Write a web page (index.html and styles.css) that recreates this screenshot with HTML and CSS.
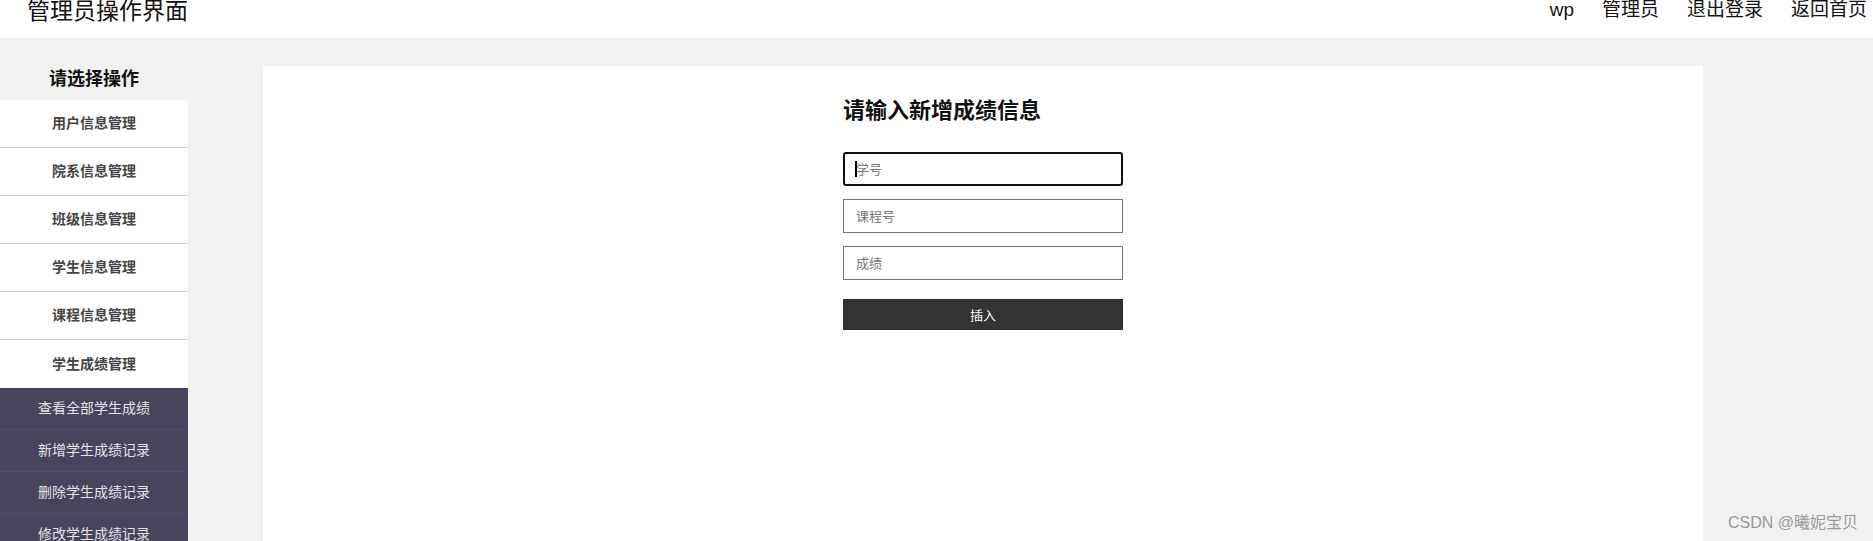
FILE: index.html
```html
<!DOCTYPE html>
<html>
<head>
  <meta charset="utf-8">
  <meta name="viewport" content="width=device-width, initial-scale=1">
  <link rel="stylesheet" href="styles.css">
</head>
<body>

<div class="top-bar">
  <div class="site-title">管理员操作界面</div>
  <div class="top-links">
    <span>wp</span>
    <span>管理员</span>
    <a href="#">退出登录</a>
    <a href="#">返回首页</a>
  </div>
</div>

<div class="page">
  <div class="side-menu">
    <h3>请选择操作</h3>
    <ul class="menu-list">
      <li>用户信息管理</li>
      <li>院系信息管理</li>
      <li>班级信息管理</li>
      <li>学生信息管理</li>
      <li>课程信息管理</li>
      <li>学生成绩管理</li>
    </ul>
    <ul class="sub-list">
      <li>查看全部学生成绩</li>
      <li>新增学生成绩记录</li>
      <li>删除学生成绩记录</li>
      <li>修改学生成绩记录</li>
    </ul>
  </div>

  <div class="content">
    <form class="add-form">
      <h2>请输入新增成绩信息</h2>
      <div class="field focused"><span class="caret"></span><input type="text" placeholder="学号"></div>
      <div class="field"><input type="text" placeholder="课程号"></div>
      <div class="field"><input type="text" placeholder="成绩"></div>
      <button type="button" class="insert-btn">插入</button>
    </form>
  </div>
</div>

<div class="watermark">CSDN @曦妮宝贝</div>

</body>
</html>
```

FILE: styles.css
```css
body {
  margin: 0;
  font-family: "Liberation Sans", "Noto Sans CJK SC", sans-serif;
  background-color: #f1f1f1;
  color: #111;
  overflow: hidden;
}

.top-bar {
  height: 38px;
  background-color: #fff;
  display: flex;
  justify-content: space-between;
  align-items: flex-start;
  padding: 0 6px 0 27px;
}

.site-title {
  font-size: 23px;
  line-height: 22px;
}

.top-links {
  display: flex;
  gap: 28px;
  font-size: 19px;
  line-height: 20px;
}

.top-links a {
  color: #111;
  text-decoration: none;
}

.page {
  display: flex;
  height: calc(100vh - 38px);
}

.side-menu {
  width: 188px;
  flex-shrink: 0;
}

.side-menu h3 {
  margin: 0;
  height: 62px;
  box-sizing: border-box;
  padding-top: 28px;
  font-size: 18px;
  line-height: 26px;
  text-align: center;
  color: #111;
}

.menu-list, .sub-list {
  list-style: none;
  margin: 0;
  padding: 0;
}

.menu-list {
  background-color: #fff;
  border-top-right-radius: 4px;
}

.menu-list li {
  height: 47px;
  line-height: 47px;
  border-bottom: 1px solid #cccccc;
  text-align: center;
  font-size: 14px;
  font-weight: bold;
  color: #444;
}

.menu-list li:last-child {
  height: 48px;
  line-height: 48px;
  border-bottom: none;
}

.sub-list {
  background-color: #48445c;
}

.sub-list li {
  height: 41px;
  line-height: 41px;
  border-bottom: 1px solid #514d66;
  text-align: center;
  font-size: 14px;
  color: #e2e2e8;
}

.content {
  flex: 1;
  background-color: #fff;
  margin: 28px 170px 0 75px;
}

.add-form {
  width: 280px;
  margin: 0 auto;
  padding-top: 30px;
}

.add-form h2 {
  margin: 0 0 26px;
  font-size: 22px;
  line-height: 30px;
  color: #111;
}

.field {
  position: relative;
  margin-bottom: 13px;
}

.field input {
  width: 100%;
  height: 34px;
  box-sizing: border-box;
  padding: 0 12px;
  border: 1px solid #767676;
  font-family: "Liberation Sans", "Noto Sans CJK SC", sans-serif;
  font-size: 13px;
  outline: none;
}

.field input::placeholder {
  color: #757575;
}

.field.focused input {
  border: 2px solid #101010;
  border-radius: 3px;
  padding-left: 11px;
}

.caret {
  position: absolute;
  left: 12px;
  top: 9px;
  width: 2px;
  height: 16px;
  background-color: #000;
}

.insert-btn {
  display: block;
  width: 280px;
  height: 31px;
  margin-top: 19px;
  border: none;
  background-color: #333;
  color: #fff;
  font-family: "Liberation Sans", "Noto Sans CJK SC", sans-serif;
  font-size: 13px;
  cursor: pointer;
}

.watermark {
  position: absolute;
  right: 15px;
  bottom: 8px;
  font-size: 16px;
  color: #9a9a9a;
}
```
